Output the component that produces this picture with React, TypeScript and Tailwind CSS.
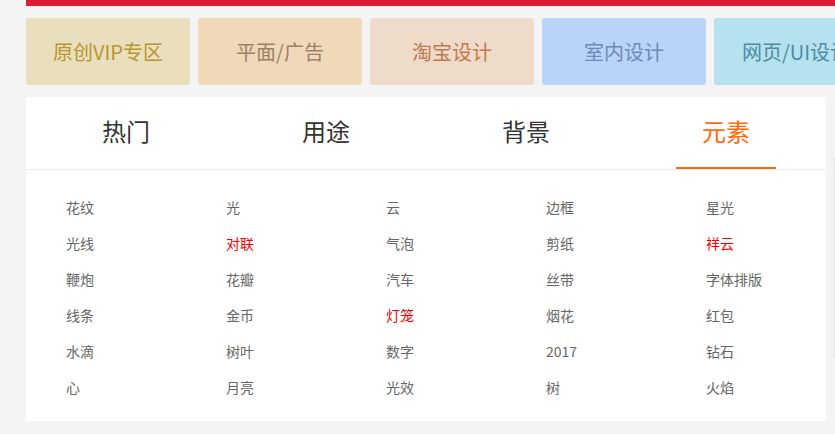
import React from "react";

const cards = [
  { label: "原创VIP专区", bg: "bg-[#e9dfbd]", fg: "text-[#b8952e]" },
  { label: "平面/广告", bg: "bg-[#f0d8b8]", fg: "text-[#9a8266]" },
  { label: "淘宝设计", bg: "bg-[#eedbca]", fg: "text-[#c0794b]" },
  { label: "室内设计", bg: "bg-[#b9d3f9]", fg: "text-[#7089b4]" },
  { label: "网页/UI设计", bg: "bg-[#b6e1ef]", fg: "text-[#4c8ca4]" },
];

const tabs = ["热门", "用途", "背景", "元素"];

const items: { t: string; red?: boolean }[] = [
  { t: "花纹" }, { t: "光" }, { t: "云" }, { t: "边框" }, { t: "星光" },
  { t: "光线" }, { t: "对联", red: true }, { t: "气泡" }, { t: "剪纸" }, { t: "祥云", red: true },
  { t: "鞭炮" }, { t: "花瓣" }, { t: "汽车" }, { t: "丝带" }, { t: "字体排版" },
  { t: "线条" }, { t: "金币" }, { t: "灯笼", red: true }, { t: "烟花" }, { t: "红包" },
  { t: "水滴" }, { t: "树叶" }, { t: "数字" }, { t: "2017" }, { t: "钻石" },
  { t: "心" }, { t: "月亮" }, { t: "光效" }, { t: "树" }, { t: "火焰" },
];

export default function App() {
  return (
    <div
      className="w-[835px] h-[434px] bg-[#f4f4f4] overflow-hidden"
      style={{ fontFamily: '"Microsoft YaHei", "Noto Sans CJK SC", "Noto Sans", sans-serif' }}
    >
      <div className="ml-[26px] h-[6px] bg-[#dc1b34]" />
      <div className="ml-[26px] mt-[12px] flex gap-[8px] whitespace-nowrap">
        {cards.map((c) => (
          <div
            key={c.label}
            className={`w-[164px] h-[67px] shrink-0 rounded-[3px] flex items-center justify-center text-[20px] ${c.bg} ${c.fg}`}
          >
            {c.label}
          </div>
        ))}
      </div>
      <div className="flex mt-[12px]">
        <div className="ml-[26px] w-[800px] h-[324px] bg-white">
          <div className="flex h-[73px] border-b border-[#eeeeee]">
            {tabs.map((t, i) => (
              <div key={t} className="w-[200px] flex justify-center">
                <div
                  className={`w-[100px] h-[72px] flex items-center justify-center text-[24px] ${
                    i === 3 ? "text-[#ff6a0c] border-b-2 border-[#ff6a0c]" : "text-[#333333] border-b-2 border-transparent"
                  }`}
                >
                  <span className="mt-[-2px]">{t}</span>
                </div>
              </div>
            ))}
          </div>
          <div className="pl-[40px] pt-[19px] grid grid-cols-[repeat(5,160px)]">
            {items.map((it, idx) => (
              <div
                key={idx}
                className={`h-[36px] flex items-center text-[14px] ${it.red ? "text-[#ff0000]" : "text-[#666666]"}`}
              >
                {it.t}
              </div>
            ))}
          </div>
        </div>
        <div className="ml-[7px] mt-[60px] w-[2px] h-[200px] bg-[#eaeaea]" />
      </div>
    </div>
  );
}
